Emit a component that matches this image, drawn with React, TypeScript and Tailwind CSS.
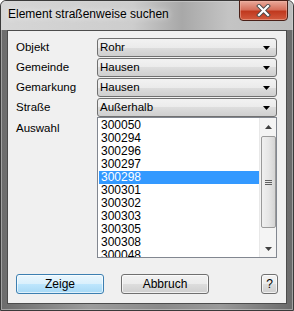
import { ReactNode } from 'react';

const items = ['300050', '300294', '300296', '300297', '300298', '300301', '300302', '300303', '300305', '300308', '300048'];

function Combo({ value }: { value: string }) {
  return (
    <div className="h-[19px] flex items-center justify-between rounded-[3px] border border-[#707070] bg-[linear-gradient(#f2f2f2_0%,#ebebeb_50%,#dddddd_50%,#cfcfcf_100%)] pl-[2px] pr-[6px] text-[11.5px] leading-none">
      <span>{value}</span>
      <svg width="7" height="4" viewBox="0 0 7 4">
        <path d="M0 0h7L3.5 4z" fill="#000" />
      </svg>
    </div>
  );
}

function Btn({ children, focused, className }: { children: ReactNode; focused?: boolean; className?: string }) {
  return (
    <div
      className={
        'h-[20px] flex items-center justify-center rounded-[3px] border text-[12px] leading-none ' +
        (focused
          ? 'border-[#3c7fb1] bg-[linear-gradient(#eaf6fd_0%,#d9f0fc_50%,#bee6fd_50%,#a7d9f5_100%)] shadow-[inset_0_0_0_1px_#ffffffa0] '
          : 'border-[#707070] bg-[linear-gradient(#f2f2f2_0%,#ebebeb_50%,#dddddd_50%,#cfcfcf_100%)] shadow-[inset_0_0_0_1px_#ffffffb0] ') +
        (className ?? '')
      }
    >
      {children}
    </div>
  );
}

export default function App() {
  return (
    <div className="w-[294px] h-[311px] bg-white" style={{ fontFamily: '"Liberation Sans", Arial, sans-serif' }}>
      {/* window frame */}
      <div className="relative w-[294px] h-[311px] rounded-t-[6px] border border-[#3a3a3a] bg-[linear-gradient(90deg,#6c6c6c_0%,#9c9c9c_30%,#8a8a8a_55%,#9a9a9a_75%,#6a6a6a_100%)] flex flex-col">
        <div className="absolute inset-0 rounded-t-[5px] border border-[#d8d8d8]/50 pointer-events-none" />
        {/* title bar */}
        <div className="h-[29px] flex items-start pl-[7px] pt-[6px] bg-[linear-gradient(90deg,#d6d6d6_0%,#cdcdcd_45%,#a8a8a8_62%,#c4c4c4_78%,#bcbcbc_100%)] rounded-t-[5px]">
          <span className="text-[12px] text-black leading-[15px] [text-shadow:0_0_6px_#ffffff]">Element straßenweise suchen</span>
        </div>
        {/* close button */}
        <div className="absolute left-[238px] top-[-1px] w-[49px] h-[21px] rounded-b-[4px] border border-[#4a2018] bg-[linear-gradient(#e9a99a_0%,#d6715d_45%,#c0391f_55%,#d25a3e_100%)] shadow-[inset_0_0_0_1px_#f0b8a880] flex items-center justify-center">
          <svg width="15" height="13" viewBox="0 0 15 13">
            <path d="M3 2l9 9M12 2l-9 9" stroke="#4a4a4a" strokeWidth="4" strokeLinecap="square" />
            <path d="M3 2l9 9M12 2l-9 9" stroke="#ffffff" strokeWidth="2.2" strokeLinecap="square" />
          </svg>
        </div>
        {/* client area */}
        <div className="mx-[6px] h-[274px] border border-[#4c4c4c] bg-[#f0f0f0] pt-[7px] pl-[8px] pr-[7px] text-black flex flex-col">
          <div className="grid grid-cols-[81px_180px] gap-y-[1px]">
            <span className="text-[11.5px] leading-[19px]">Objekt</span>
            <Combo value="Rohr" />
            <span className="text-[11.5px] leading-[19px]">Gemeinde</span>
            <Combo value="Hausen" />
            <span className="text-[11.5px] leading-[19px]">Gemarkung</span>
            <Combo value="Hausen" />
            <span className="text-[11.5px] leading-[19px]">Straße</span>
            <Combo value="Außerhalb" />
            <span className="text-[11.5px] leading-[19px] pt-[1px]">Auswahl</span>
            <div className="h-[141px] -mt-[1px] border border-[#828790] bg-white flex overflow-hidden">
              <div className="flex-1 pt-[1px] pl-[1px]">
                {items.map((it) => (
                  <div
                    key={it}
                    className={
                      'h-[13px] pl-[2px] text-[12px] leading-[13px] ' +
                      (it === '300298' ? 'bg-[#3399ff] text-white' : '')
                    }
                  >
                    {it}
                  </div>
                ))}
              </div>
              {/* scrollbar */}
              <div className="w-[17px] bg-[#f4f4f4] border-l border-[#e8e8e8] flex flex-col items-center">
                <div className="h-[17px] flex items-center justify-center">
                  <svg width="7" height="4" viewBox="0 0 7 4">
                    <path d="M3.5 0L7 4H0z" fill="#404040" />
                  </svg>
                </div>
                <div className="mt-[1px] w-[15px] h-[92px] rounded-[2px] border border-[#9a9a9a] bg-[linear-gradient(90deg,#f0f0f0_0%,#e6e6e6_50%,#d4d4d4_100%)] flex flex-col items-center justify-center gap-[1px]">
                  <div className="w-[7px] h-[1px] bg-[#606060]" />
                  <div className="w-[7px] h-[1px] bg-[#606060]" />
                  <div className="w-[7px] h-[1px] bg-[#606060]" />
                </div>
                <div className="flex-1" />
                <div className="h-[17px] flex items-center justify-center">
                  <svg width="7" height="4" viewBox="0 0 7 4">
                    <path d="M0 0h7L3.5 4z" fill="#404040" />
                  </svg>
                </div>
              </div>
            </div>
          </div>
          <div className="mt-[16px] flex items-center">
            <Btn focused className="w-[88px]">Zeige</Btn>
            <Btn className="w-[88px] ml-[17px]">Abbruch</Btn>
            <div className="flex-1" />
            <Btn className="w-[17px] mr-[1px]">?</Btn>
          </div>
        </div>
      </div>
    </div>
  );
}
